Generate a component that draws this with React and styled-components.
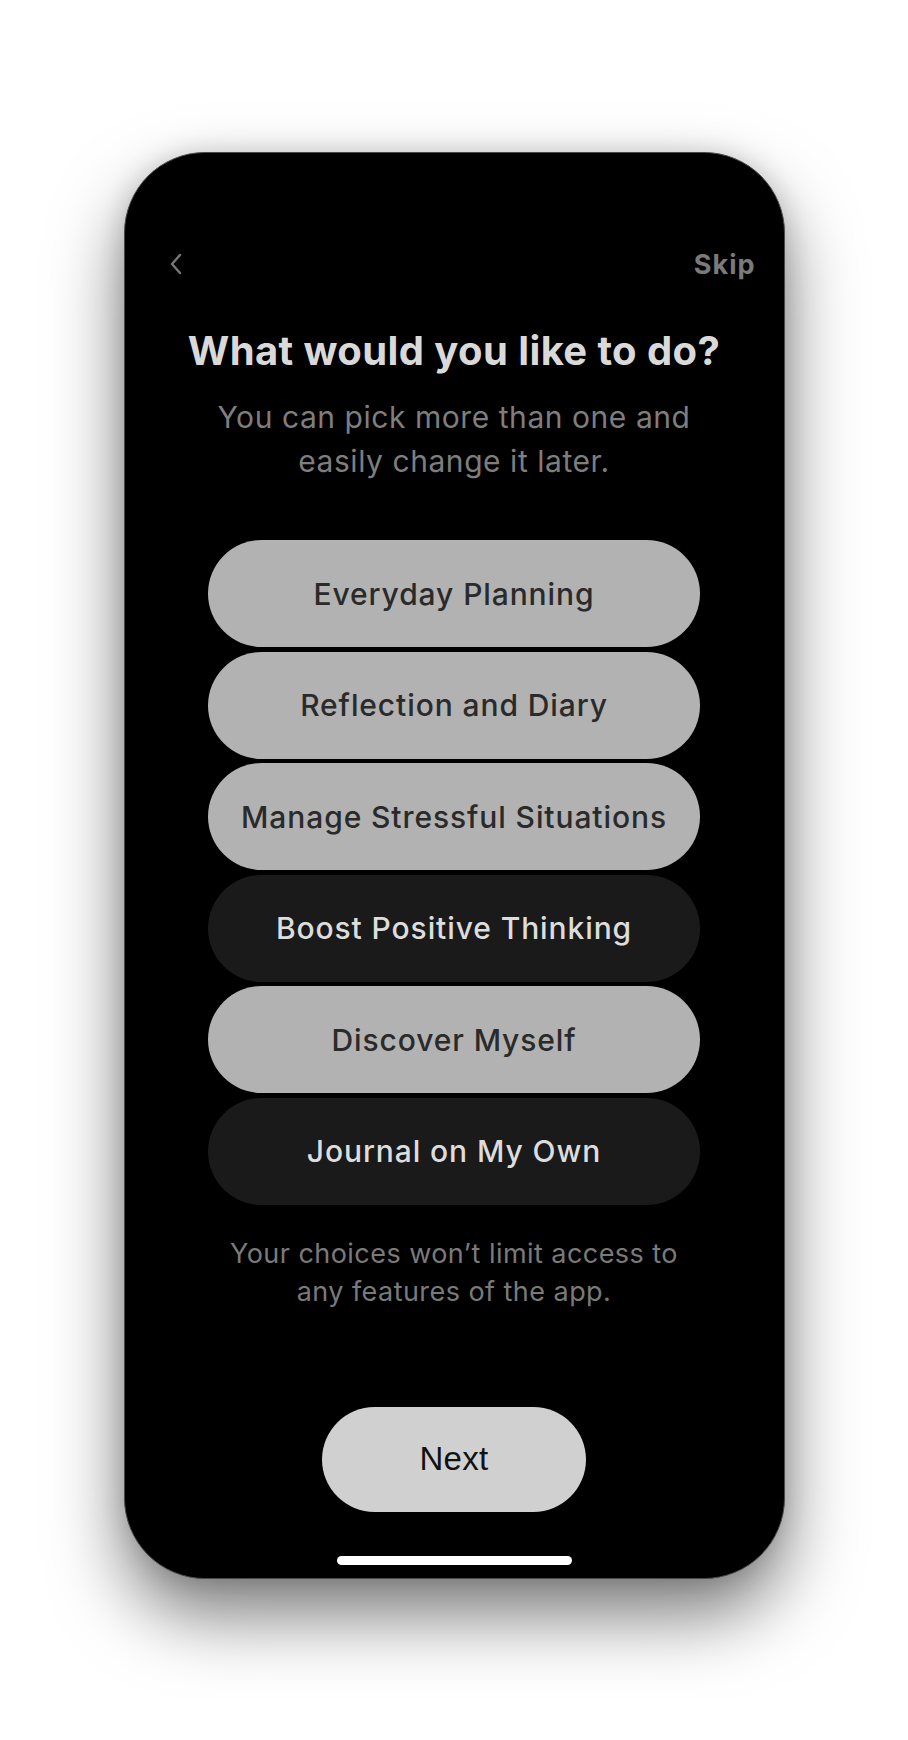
import React, { useState } from 'react'
import styled, { createGlobalStyle } from 'styled-components'

const GlobalStyle = createGlobalStyle`
body {
    margin: 0;
    background: #ffffff;
    font-family: Inter, "Noto Sans", sans-serif;
}
`

const Page = styled.div`
width: 908px;
height: 1740px;
padding-top: 152px;
box-sizing: border-box;
display: flex;
justify-content: center;
align-items: flex-start;
`

const Phone = styled.div`
width: 661px;
height: 1427px;
box-sizing: border-box;
background: #000;
border: 1.5px solid #4a4a4a;
border-radius: 81px;
box-shadow: 0 36px 72px rgba(0, 0, 0, 0.52), 0 0 26px rgba(0, 0, 0, 0.14);
display: flex;
flex-direction: column;
align-items: center;
overflow: hidden;
`

const TopBar = styled.div`
width: 100%;
box-sizing: border-box;
margin-top: 96px;
padding: 0 28px 0 43px;
height: 30px;
display: flex;
align-items: center;
justify-content: space-between;
`

const BackButton = styled.button`
background: none;
border: none;
padding: 0;
display: flex;
align-items: center;
cursor: pointer;
`

const SkipButton = styled.button`
background: none;
border: none;
padding: 0;
font-family: Inter, sans-serif;
font-size: 27px;
font-weight: 700;
color: #7a7a7a;
letter-spacing: 1px;
cursor: pointer;
`

const Title = styled.h1`
margin: 48px 0 0;
font-size: 40px;
line-height: 48px;
font-weight: 700;
color: #d9d9d9;
letter-spacing: 0.4px;
text-align: center;
`

const Subtitle = styled.p`
margin: 20px 0 0;
font-size: 30px;
line-height: 44px;
font-weight: 400;
color: #7e7e7e;
letter-spacing: 0.55px;
text-align: center;
`

const Options = styled.div`
margin-top: 57px;
width: 492px;
display: flex;
flex-direction: column;
gap: 4.5px;
`

const Option = styled.button`
height: 107px;
width: 100%;
border: none;
border-radius: 54px;
background: ${p => (p.$selected ? '#b2b2b2' : '#1a1a1a')};
color: ${p => (p.$selected ? '#2a2a2a' : '#dddddd')};
font-family: Inter, sans-serif;
font-size: 30px;
font-weight: 500;
letter-spacing: 0.9px;
cursor: pointer;
`

const Note = styled.p`
margin: 30px 0 0;
font-size: 27px;
line-height: 38px;
color: #7a7a7a;
letter-spacing: 0.45px;
text-align: center;
`

const NextButton = styled.button`
margin-top: 96px;
width: 264px;
height: 105px;
border: none;
border-radius: 53px;
background: #d0d0d0;
color: #111;
font-family: "Liberation Sans", Arial, sans-serif;
font-size: 33px;
font-weight: 400;
letter-spacing: 0.3px;
cursor: pointer;
`

const HomeIndicator = styled.div`
margin-top: 44px;
width: 235px;
height: 9px;
border-radius: 5px;
background: #fff;
`

const options = [
    { label: 'Everyday Planning', selected: true },
    { label: 'Reflection and Diary', selected: true },
    { label: 'Manage Stressful Situations', selected: true },
    { label: 'Boost Positive Thinking', selected: false },
    { label: 'Discover Myself', selected: true },
    { label: 'Journal on My Own', selected: false },
]

const App = () => {
    const [items, setItems] = useState(options)

    const toggle = (i) => {
        setItems(items.map((it, idx) => (idx === i ? { ...it, selected: !it.selected } : it)))
    }

    return (
        <Page>
            <GlobalStyle />
            <Phone>
                <TopBar>
                    <BackButton aria-label="Back">
                        <svg width="16" height="24" viewBox="0 0 16 24">
                            <polyline points="12,3 4,12 12,21" fill="none" stroke="#777" strokeWidth="2.4" strokeLinecap="round" strokeLinejoin="round" />
                        </svg>
                    </BackButton>
                    <SkipButton>Skip</SkipButton>
                </TopBar>
                <Title>What would you like to do?</Title>
                <Subtitle>
                    You can pick more than one and
                    <br />
                    easily change it later.
                </Subtitle>
                <Options>
                    {items.map((it, i) => (
                        <Option key={it.label} $selected={it.selected} onClick={() => toggle(i)}>
                            {it.label}
                        </Option>
                    ))}
                </Options>
                <Note>
                    Your choices won’t limit access to
                    <br />
                    any features of the app.
                </Note>
                <NextButton>Next</NextButton>
                <HomeIndicator />
            </Phone>
        </Page>
    )
}

export default App
